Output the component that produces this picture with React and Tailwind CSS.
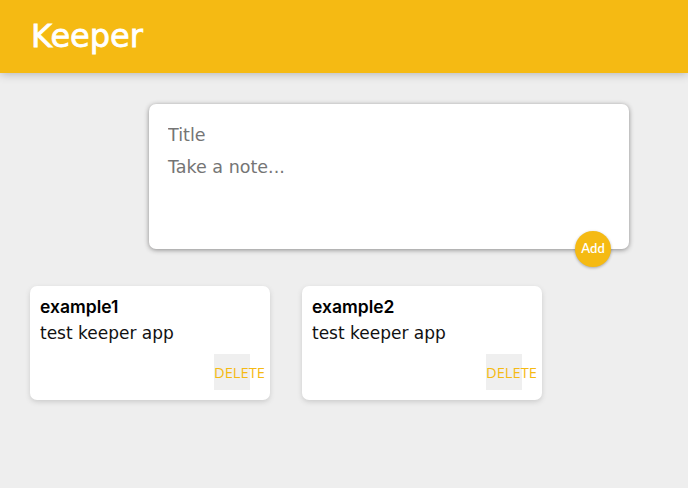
import React from "react";

const notes = [
  { title: "example1", content: "test keeper app" },
  { title: "example2", content: "test keeper app" },
];

export default function App() {
  return (
    <div className="min-h-[488px] bg-[#eeeeee] font-['Inter',sans-serif]">
      <header className="h-[73px] bg-[#f5ba13] px-[31px] flex items-center shadow-[0_0_10px_rgba(0,0,0,0.3)]">
        <h1 className="text-white text-[32px] font-normal font-['DejaVu_Sans',sans-serif] leading-none -mt-[1px] [-webkit-text-stroke:0.8px_white]">
          Keeper
        </h1>
      </header>

      <form
        className="relative ml-[149px] mt-[31px] w-[480px] h-[145px] bg-white rounded-[7px] px-[15px] pt-[15px] shadow-[0_1px_5px_rgb(138,137,137)]"
        onSubmit={(e) => e.preventDefault()}
      >
        <input
          name="title"
          placeholder="Title"
          className="block w-full h-[32px] px-1 text-[17.5px] font-['DejaVu_Sans',sans-serif] text-[#222] placeholder:text-[#757575] outline-none border-none"
        />
        <textarea
          name="content"
          placeholder="Take a note..."
          rows={3}
          className="block w-full h-[80px] px-1 py-[4px] text-[17.5px] font-['DejaVu_Sans',sans-serif] leading-[24px] text-[#222] placeholder:text-[#757575] outline-none border-none resize-none"
        />
        <button
          type="submit"
          className="absolute right-[18px] -bottom-[18px] w-9 h-9 rounded-full bg-[#f5ba13] text-white text-[13px] font-semibold font-['Lato',sans-serif] shadow-[0_1px_3px_rgba(0,0,0,0.3)]"
        >
          Add
        </button>
      </form>

      <div className="flex gap-8 px-[30px] mt-[37px]">
        {notes.map((n) => (
          <div
            key={n.title}
            className="w-[240px] h-[114px] bg-white rounded-[7px] shadow-[0_2px_5px_#ccc] p-[10px] flex flex-col"
          >
            <h2 className="text-[17.5px] font-semibold text-black leading-[21px]">{n.title}</h2>
            <p className="mt-[6px] text-[17px] font-['DejaVu_Sans',sans-serif] text-[#111] leading-[21px]">{n.content}</p>
            <div className="mt-auto flex justify-end pr-[10px]">
              <div className="w-9 h-9 bg-[#efefef] flex items-center overflow-visible whitespace-nowrap text-[14.7px] text-[#f5ba13] font-['Open_Sans',sans-serif]">
                DELETE
              </div>
            </div>
          </div>
        ))}
      </div>
    </div>
  );
}
